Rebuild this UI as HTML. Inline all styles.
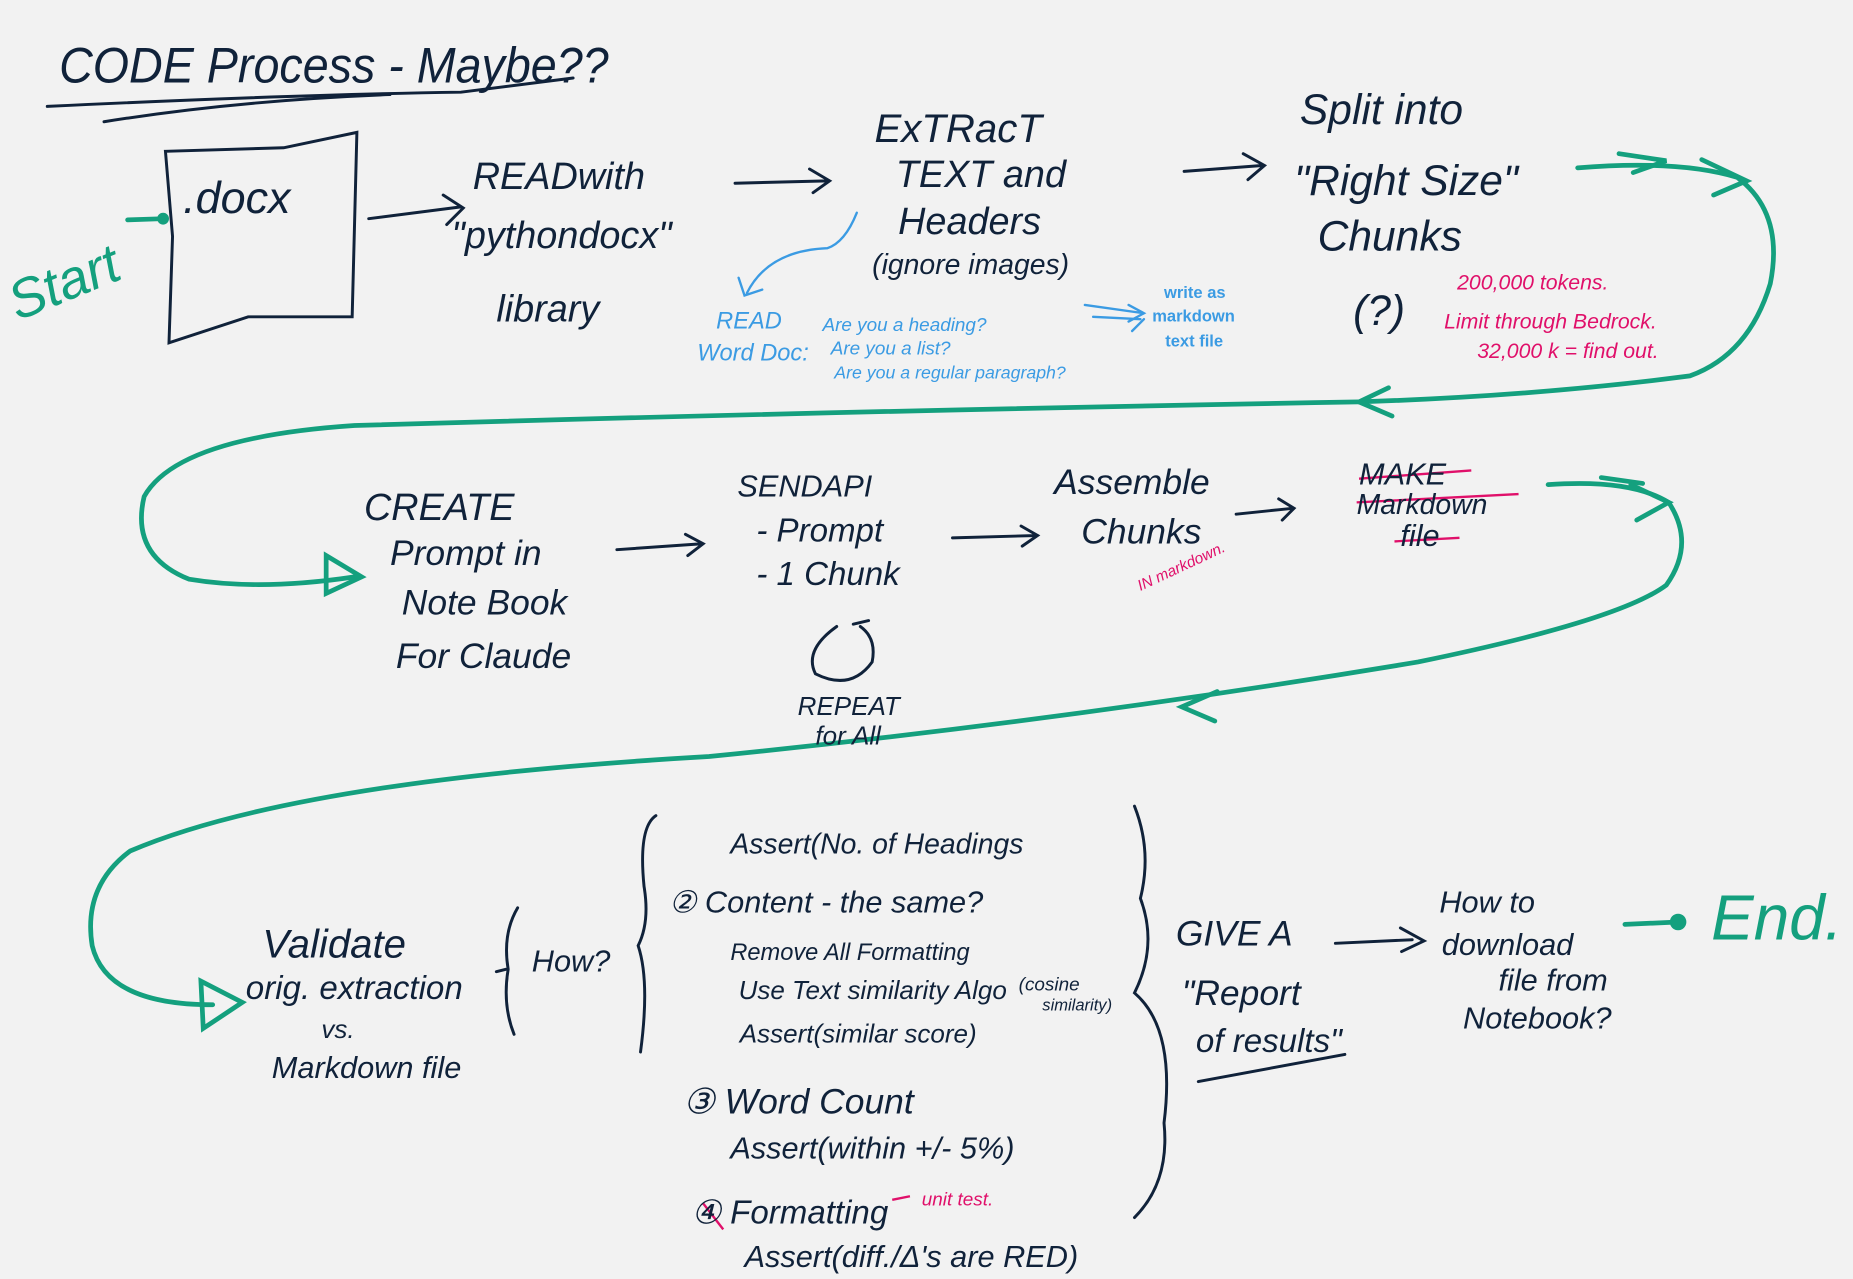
<!DOCTYPE html>
<html><head><meta charset="utf-8"><style>
html,body{margin:0;padding:0;background:#f2f2f2;}
svg{display:block}
text{font-family:"Liberation Sans",sans-serif;font-style:italic}
.k{fill:#10223a}
.b{fill:#3b9be3}
.p{fill:#e0106a}
.g{fill:#14a07e}
</style></head><body>
<svg width="1853" height="1279" viewBox="0 0 1568 1082" preserveAspectRatio="none" xmlns="http://www.w3.org/2000/svg">
<rect width="1568" height="1082" fill="#f2f2f2"/>
<g fill="none" stroke="#10223a" stroke-width="2.5" stroke-linecap="round">
<path d="M40 90 Q250 80 390 78 L485 66"/>
<path d="M88 103 Q200 85 330 80"/>
<path d="M140 128 L240 125 L302 112 L300 190 L298 268 L210 268 L143 290 L146 200 Z"/>
<path d="M312 185 L390 175 M375 165 L392 176 L378 190"/>
<path d="M622 155 L700 153 M685 143 L702 153 L688 163"/>
<path d="M1002 145 L1068 140 M1052 130 L1070 140 L1056 152"/>
<path d="M522 465 L594 460 M580 452 L595 460 L582 470"/>
<path d="M806 455 L878 453 M864 445 L878 453 L865 462"/>
<path d="M1046 435 L1094 430 M1082 422 L1095 430 L1085 440"/>
<path d="M708 530 Q680 550 690 570 Q720 585 738 560 Q742 540 728 530 M722 528 L735 525"/>
<path d="M555 690 Q540 700 545 750 Q550 780 540 800 Q550 830 542 890"/>
<path d="M960 682 Q975 720 965 760 Q980 800 960 840 Q995 870 985 950 Q990 1000 960 1030"/>
<path d="M438 768 Q425 790 430 820 Q425 850 435 875 M428 820 L420 822"/>
<path d="M1014 915 L1138 892"/>
<path d="M1130 798 L1195 795 M1185 785 L1205 796 L1186 805"/>
</g>
<g fill="none" stroke="#14a07e" stroke-width="4" stroke-linecap="round">
<path d="M1335 142 Q1420 135 1470 150 Q1510 180 1498 240 Q1480 300 1430 318 Q1300 335 1150 340 Q700 348 300 360 Q150 370 122 420 Q110 470 160 490 Q220 500 300 488"/>
<path d="M1150 340 L1175 328 M1150 340 L1178 352"/>
<path d="M276 470 L306 488 L276 502 Z"/>
<path d="M1310 410 Q1380 405 1412 425 Q1435 460 1410 495 Q1370 525 1200 560 Q900 610 600 640 Q250 660 110 720 Q70 750 78 800 Q90 850 180 850"/>
<path d="M1030 585 L1000 598 L1028 610"/>
<path d="M170 830 L205 848 L172 870 Z"/>
<path d="M1440 135 L1478 153 L1450 165"/>
<path d="M1380 410 L1412 425 L1385 440"/>
<path d="M1370 130 L1410 136 L1382 146 M1355 404 L1390 409"/>
<path d="M108 186 L138 185"/>
<path d="M1375 782 L1420 780"/>
</g>
<circle cx="138" cy="185" r="5" fill="#14a07e"/>
<circle cx="1420" cy="780" r="7" fill="#14a07e"/>
<g fill="none" stroke="#3b9be3" stroke-width="2" stroke-linecap="round">
<path d="M725 180 Q715 205 700 210 Q650 212 632 248 M625 235 L630 250 L645 245"/>
<path d="M918 258 L968 265 M955 258 L968 265 L955 272 M925 268 L965 270 M958 280 L968 270"/>
</g>
<g fill="none" stroke="#e0106a" stroke-width="2">
<path d="M1150 405 L1245 398 M1148 425 L1285 418 M1180 458 L1235 455"/>
<path d="M595 1018 L612 1040 M755 1015 L770 1012"/>
</g>
<text x="50" y="70" font-size="42" class="k" textLength="465" lengthAdjust="spacingAndGlyphs">CODE Process - Maybe??</text>
<text x="0" y="255" font-size="46" class="g" transform="rotate(-22 50 225)">Start</text>
<text x="155" y="180" font-size="38" class="k">.docx</text>
<text x="400" y="160" font-size="32" class="k">READwith</text>
<text x="382" y="210" font-size="32" class="k">"pythondocx"</text>
<text x="420" y="272" font-size="32" class="k">library</text>
<text x="740" y="120" font-size="34" class="k">ExTRacT</text>
<text x="758" y="158" font-size="32" class="k">TEXT and</text>
<text x="760" y="198" font-size="32" class="k">Headers</text>
<text x="738" y="232" font-size="24" class="k">(ignore images)</text>
<text x="606" y="278" font-size="20" class="b">READ</text>
<text x="590" y="305" font-size="20" class="b">Word Doc:</text>
<text x="696" y="280" font-size="16" class="b">Are you a heading?</text>
<text x="703" y="300" font-size="16" class="b">Are you a list?</text>
<text x="706" y="320" font-size="15" class="b">Are you a regular paragraph?</text>
<text x="985" y="252" font-size="14" class="b" style="font-style:normal;font-weight:bold">write as</text>
<text x="975" y="272" font-size="14" class="b" style="font-style:normal;font-weight:bold">markdown</text>
<text x="986" y="293" font-size="14" class="b" style="font-style:normal;font-weight:bold">text file</text>
<text x="1100" y="105" font-size="36" class="k">Split into</text>
<text x="1095" y="165" font-size="36" class="k">"Right Size"</text>
<text x="1115" y="212" font-size="36" class="k">Chunks</text>
<text x="1145" y="275" font-size="36" class="k">(?)</text>
<text x="1233" y="245" font-size="18" class="p">200,000 tokens.</text>
<text x="1222" y="278" font-size="18" class="p">Limit through Bedrock.</text>
<text x="1250" y="303" font-size="18" class="p">32,000 k = find out.</text>
<text x="308" y="440" font-size="32" class="k">CREATE</text>
<text x="330" y="478" font-size="30" class="k">Prompt in</text>
<text x="340" y="520" font-size="30" class="k">Note Book</text>
<text x="335" y="565" font-size="30" class="k">For Claude</text>
<text x="624" y="420" font-size="26" class="k">SENDAPI</text>
<text x="640" y="458" font-size="28" class="k">- Prompt</text>
<text x="640" y="495" font-size="28" class="k">- 1 Chunk</text>
<text x="675" y="605" font-size="22" class="k">REPEAT</text>
<text x="690" y="630" font-size="22" class="k">for All</text>
<text x="892" y="418" font-size="30" class="k">Assemble</text>
<text x="915" y="460" font-size="30" class="k">Chunks</text>
<text x="965" y="500" font-size="13" class="p" transform="rotate(-25 965 500)">IN markdown.</text>
<text x="1150" y="410" font-size="26" class="k">MAKE</text>
<text x="1148" y="435" font-size="24" class="k">Markdown</text>
<text x="1185" y="462" font-size="26" class="k">file</text>
<text x="222" y="810" font-size="34" class="k">Validate</text>
<text x="208" y="845" font-size="28" class="k">orig. extraction</text>
<text x="272" y="878" font-size="22" class="k">vs.</text>
<text x="230" y="912" font-size="26" class="k">Markdown file</text>
<text x="450" y="822" font-size="26" class="k">How?</text>
<text x="618" y="722" font-size="24" class="k">Assert(No. of Headings</text>
<text x="566" y="772" font-size="26" class="k">② Content - the same?</text>
<text x="618" y="812" font-size="20" class="k">Remove All Formatting</text>
<text x="625" y="845" font-size="22" class="k">Use Text similarity Algo</text>
<text x="862" y="838" font-size="16" class="k">(cosine</text>
<text x="882" y="855" font-size="14" class="k">similarity)</text>
<text x="626" y="882" font-size="22" class="k">Assert(similar score)</text>
<text x="578" y="942" font-size="30" class="k">③ Word Count</text>
<text x="618" y="980" font-size="26" class="k">Assert(within +/- 5%)</text>
<text x="585" y="1035" font-size="28" class="k">④ Formatting</text>
<text x="780" y="1020" font-size="16" class="p">unit test.</text>
<text x="630" y="1072" font-size="26" class="k">Assert(diff./Δ's are RED)</text>
<text x="995" y="800" font-size="30" class="k">GIVE A</text>
<text x="1000" y="850" font-size="30" class="k">"Report</text>
<text x="1012" y="890" font-size="28" class="k">of results"</text>
<text x="1218" y="772" font-size="26" class="k">How to</text>
<text x="1220" y="808" font-size="26" class="k">download</text>
<text x="1268" y="838" font-size="26" class="k">file from</text>
<text x="1238" y="870" font-size="26" class="k">Notebook?</text>
<text x="1448" y="795" font-size="54" class="g">End.</text>
</svg>
</body></html>
